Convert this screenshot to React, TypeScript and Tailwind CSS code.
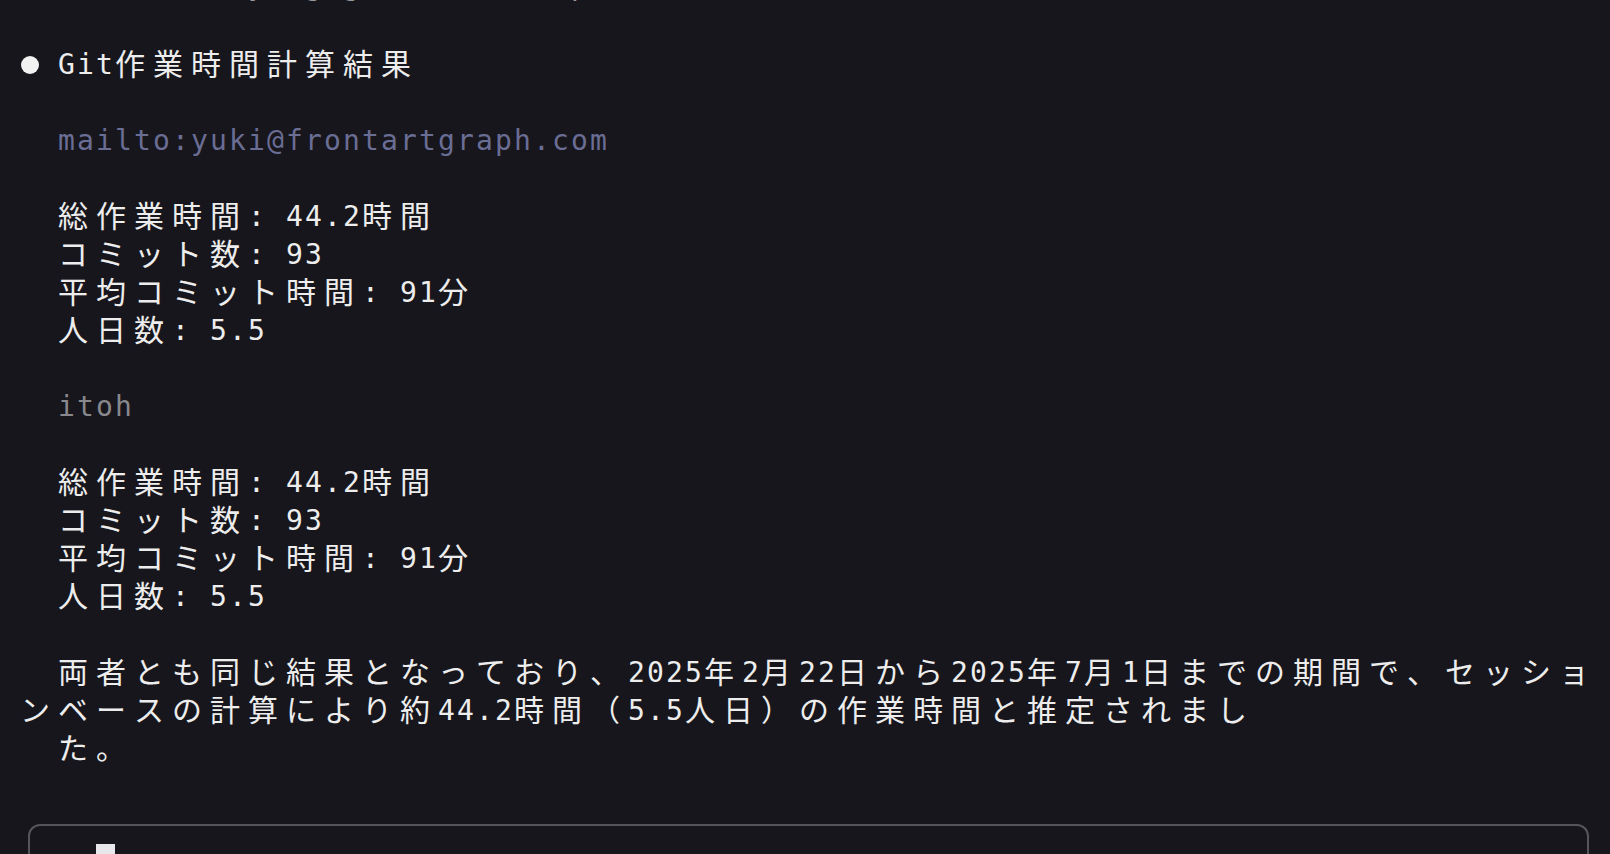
import React from "react";

const isWide = (ch: string) => {
  const c = ch.codePointAt(0) || 0;
  return (
    (c >= 0x1100 && c <= 0x115f) ||
    (c >= 0x2e80 && c <= 0xa4cf) ||
    (c >= 0xac00 && c <= 0xd7a3) ||
    (c >= 0xf900 && c <= 0xfaff) ||
    (c >= 0xfe30 && c <= 0xfe4f) ||
    (c >= 0xff00 && c <= 0xff60) ||
    (c >= 0xffe0 && c <= 0xffe6)
  );
};

function Cells({ text, top = false }: { text: string; top?: boolean }) {
  const chars = Array.from(text);
  return (
    <>
      {chars.map((ch, i) =>
        isWide(ch) ? (
          <span
            key={i}
            className="inline-block align-top w-[38px] h-[38px] leading-[32px] text-[30px] [font-family:'Noto_Sans_CJK_JP',sans-serif]"
          >
            {ch}
          </span>
        ) : (
          <span
            key={i}
            className={`inline-block align-top w-[19px] h-[38px] ${top ? "leading-[31.5px]" : "leading-[38px]"} text-[28px] [font-family:'DejaVu_Sans_Mono',monospace]`}
          >
            {ch === " " ? "\u00a0" : ch}
          </span>
        )
      )}
    </>
  );
}

function Row({ text = "", color = "text-[#ededed]", top = false }: { text?: string; color?: string; top?: boolean }) {
  return (
    <div className={`h-[38px] whitespace-pre overflow-visible pl-[20px] ${color}`}>
      <Cells text={text} top={top} />
    </div>
  );
}

function Bullet({ text }: { text: string }) {
  return (
    <div className="h-[38px] whitespace-pre pl-[20px] text-[#ededed] flex">
      <span className="w-[38px] h-[38px] flex items-center">
        <span className="block w-[18px] h-[18px] rounded-full bg-[#f2f2f2] ml-[1px]" />
      </span>
      <span className="block">
        <Cells text={text} />
      </span>
    </div>
  );
}

export default function App() {
  const stats = ["  総作業時間: 44.2時間", "  コミット数: 93", "  平均コミット時間: 91分", "  人日数: 5.5"];
  return (
    <div className="w-[1610px] h-[854px] overflow-hidden bg-[#17161c]">
      <div className="mt-[-30px]">
        <Row text="        Querying git (see output)" color="text-[#9a9a9e]" top />
        <Row />
        <Bullet text="Git作業時間計算結果" />
        <Row />
        <Row text="  mailto:yuki@frontartgraph.com" color="text-[#6a6d94]" />
        <Row />
        {stats.map((s, i) => (
          <Row key={"a" + i} text={s} />
        ))}
        <Row />
        <Row text="  itoh" color="text-[#88888d]" />
        <Row />
        {stats.map((s, i) => (
          <Row key={"b" + i} text={s} />
        ))}
        <Row />
        <Row text="  両者とも同じ結果となっており、2025年2月22日から2025年7月1日までの期間で、セッショ" />
        <Row text="ンベースの計算により約44.2時間（5.5人日）の作業時間と推定されまし" />
        <Row text="  た。" />
        <Row />
        <div className="ml-[28px] w-[1561px] mt-[18px] h-[120px] border-2 border-[#55555b] rounded-[12px] pt-[18px] pl-[66px]">
          <div className="w-[19px] h-[38px] bg-[#e8e8ec]" />
        </div>
      </div>
    </div>
  );
}
